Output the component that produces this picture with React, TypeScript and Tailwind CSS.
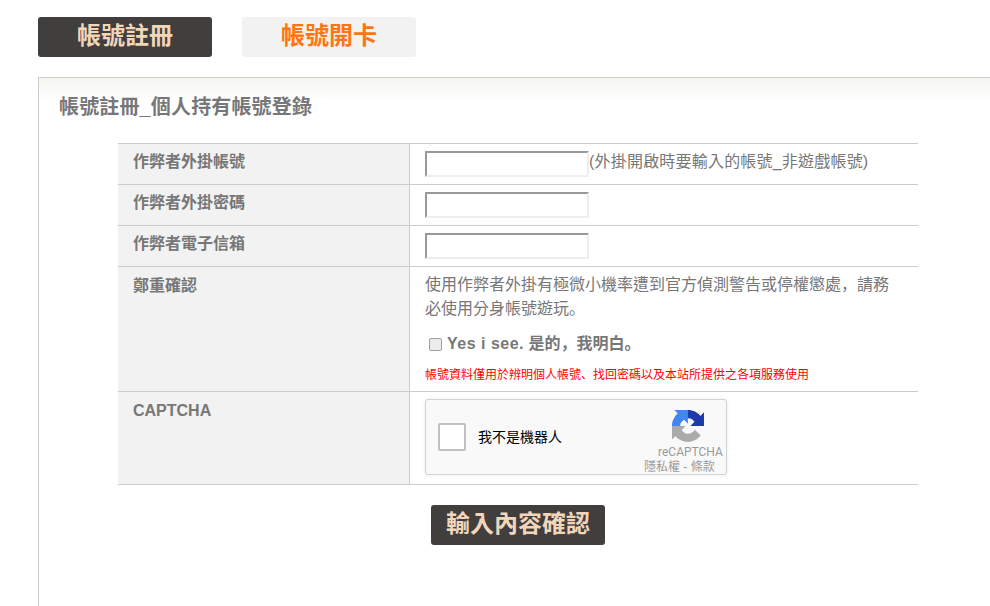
function P({ c }: { c: string }) {
  return <span className="leading-[0]" style={{ fontFamily: '"Noto Sans CJK SC", sans-serif' }}>{c}</span>;
}

export default function App() {
  const font = { fontFamily: '"Liberation Sans", "Noto Sans CJK TC", sans-serif' };
  const rowInput = "h-[26px] w-[164px] border-2 border-t-[#999] border-l-[#999] border-r-[#eee] border-b-[#eee] bg-white";
  const label = "w-[292px] shrink-0 border-r border-[#ccc] bg-[#f2f2f2] pl-[15px] text-[16px] font-bold text-[#777]";
  return (
    <div style={font} className="h-[606px] w-[990px] overflow-hidden bg-white text-[#777]">
      <div className="flex gap-[30px] pl-[38px] pt-[17px]">
        <div className="flex h-10 w-[174px] items-center justify-center rounded-[3px] bg-[#413e3e] pb-[3px] text-[24px] font-bold text-[#f2d6ba]">帳號註冊</div>
        <div className="flex h-10 w-[174px] items-center justify-center rounded-[3px] bg-[#f2f2f2] pb-[3px] text-[24px] font-bold text-[#ff7510]">帳號開卡</div>
      </div>
      <div className="ml-[38px] mt-5 h-[600px] border-l border-t border-[#ccc] bg-gradient-to-b from-[#f5f5f0] to-white to-[24px] pl-5">
        <h1 className="flex h-[58px] items-center text-[20px] font-bold leading-none tracking-[0.15px] text-[#777]">帳號註冊_個人持有帳號登錄</h1>
        <div className="ml-[59px] mt-[7px] w-[800px] border-t border-[#ccc]">
          <div className="flex h-[41px] border-b border-[#ccc]">
            <div className={label + " pt-[6px] leading-[24px]"}>作弊者外掛帳號</div>
            <div className="flex items-start pl-[15px] pt-[7px] text-[16px] leading-[22px] tracking-[0.2px]">
              <input className={rowInput} />
              <span>(外掛開啟時要輸入的帳號_非遊戲帳號)</span>
            </div>
          </div>
          <div className="flex h-[41px] border-b border-[#ccc]">
            <div className={label + " pt-[6px] leading-[24px]"}>作弊者外掛密碼</div>
            <div className="pl-[15px] pt-[7px]"><input className={rowInput} /></div>
          </div>
          <div className="flex h-[41px] border-b border-[#ccc]">
            <div className={label + " pt-[6px] leading-[24px]"}>作弊者電子信箱</div>
            <div className="pl-[15px] pt-[7px]"><input className={rowInput} /></div>
          </div>
          <div className="flex h-[125px] border-b border-[#ccc]">
            <div className={label + " pt-[7px] leading-[24px]"}>鄭重確認</div>
            <div className="w-[480px] pl-[15px] pt-[6px] text-[16px] leading-[24px]">
              <p>使用作弊者外掛有極微小機率遭到官方偵測警告或停權懲處<P c="，" />請務必使用分身帳號遊玩<P c="。" /></p>
              <div className="mt-[11px] flex items-center pl-[4px] font-bold">
                <input type="checkbox" className="mr-[5px] h-[13px] w-[13px] appearance-none rounded-[2px] border border-[#a0a0a0] bg-[#ececec]" />
                <span><span className="tracking-[0.5px]">Yes i see.</span> 是的<P c="，" />我明白<P c="。" /></span>
              </div>
              <p className="mt-[11px] whitespace-nowrap text-[12px] leading-[16px] text-[#f00]">帳號資料僅用於辨明個人帳號<P c="、" />找回密碼以及本站所提供之各項服務使用</p>
            </div>
          </div>
          <div className="flex h-[93px] border-b border-[#ccc]">
            <div className={label + " pt-[7px] leading-[24px]"}>CAPTCHA</div>
            <div className="pl-[15px] pt-[7px]">
              <div className="flex h-[76px] w-[302px] items-center rounded-[3px] border border-[#d3d3d3] bg-[#f9f9f9] pl-3 pr-1 shadow-[0_0_4px_rgba(0,0,0,0.08)]">
                <div className="h-7 w-7 rounded-[2px] border-2 border-[#c1c1c1] bg-white" />
                <span className="ml-3 flex-1 text-[14px] text-black">我不是機器人</span>
                <div className="flex w-[80px] flex-col self-stretch pt-[10px]">
                  <svg viewBox="0 0 64 64" className="ml-[30px] h-8 w-8 shrink-0">
                    <path d="M64 31.955l-.033-1.37V4.687l-7.16 7.16C50.948 4.674 42.033.093 32.05.093c-10.4 0-19.622 4.96-25.458 12.64l11.736 11.86a15.55 15.55 0 0 1 4.754-5.334c2.05-1.6 4.952-2.906 8.968-2.906.485 0 .86.057 1.135.163 4.976.393 9.288 3.14 11.828 7.124l-8.307 8.307L64 31.953" fill="#1c3aa9" />
                    <path d="M31.862 0l-1.37.033H4.594l7.16 7.16C4.58 13.052 0 21.967 0 31.95c0 10.4 4.96 19.622 12.64 25.458L24.5 45.67a15.55 15.55 0 0 1-5.334-4.754c-1.6-2.05-2.906-4.952-2.906-8.968 0-.485.057-.86.163-1.135.393-4.976 3.14-9.288 7.124-11.828l8.307 8.307L31.86 0" fill="#4285f4" />
                    <path d="M.001 31.955l.033 1.37v25.898l7.16-7.16c5.86 7.173 14.775 11.754 24.76 11.754 10.4 0 19.622-4.96 25.458-12.64l-11.736-11.86a15.55 15.55 0 0 1-4.754 5.334c-2.05 1.6-4.952 2.906-8.968 2.906-.485 0-.86-.057-1.135-.163-4.976-.393-9.288-3.14-11.828-7.124l8.307-8.307c-10.522.001-22.4.001-28.3-.008" fill="#ababab" />
                  </svg>
                  <span className="mt-[3px] ml-[16px] whitespace-nowrap text-[12px] leading-[14px] text-[#999]" style={{ fontFamily: 'Roboto, sans-serif' }}>reCAPTCHA</span>
                  <span className="ml-[2px] whitespace-nowrap pt-[1px] text-[12px] leading-[15px] text-[#999]">隱私權 - 條款</span>
                </div>
              </div>
            </div>
          </div>
        </div>
        <div className="ml-[372px] mt-5 flex h-10 w-[174px] items-center justify-center rounded-[3px] bg-[#413e3e] pb-[3px] text-[24px] font-bold text-[#f2d6ba]">輸入內容確認</div>
      </div>
    </div>
  );
}
